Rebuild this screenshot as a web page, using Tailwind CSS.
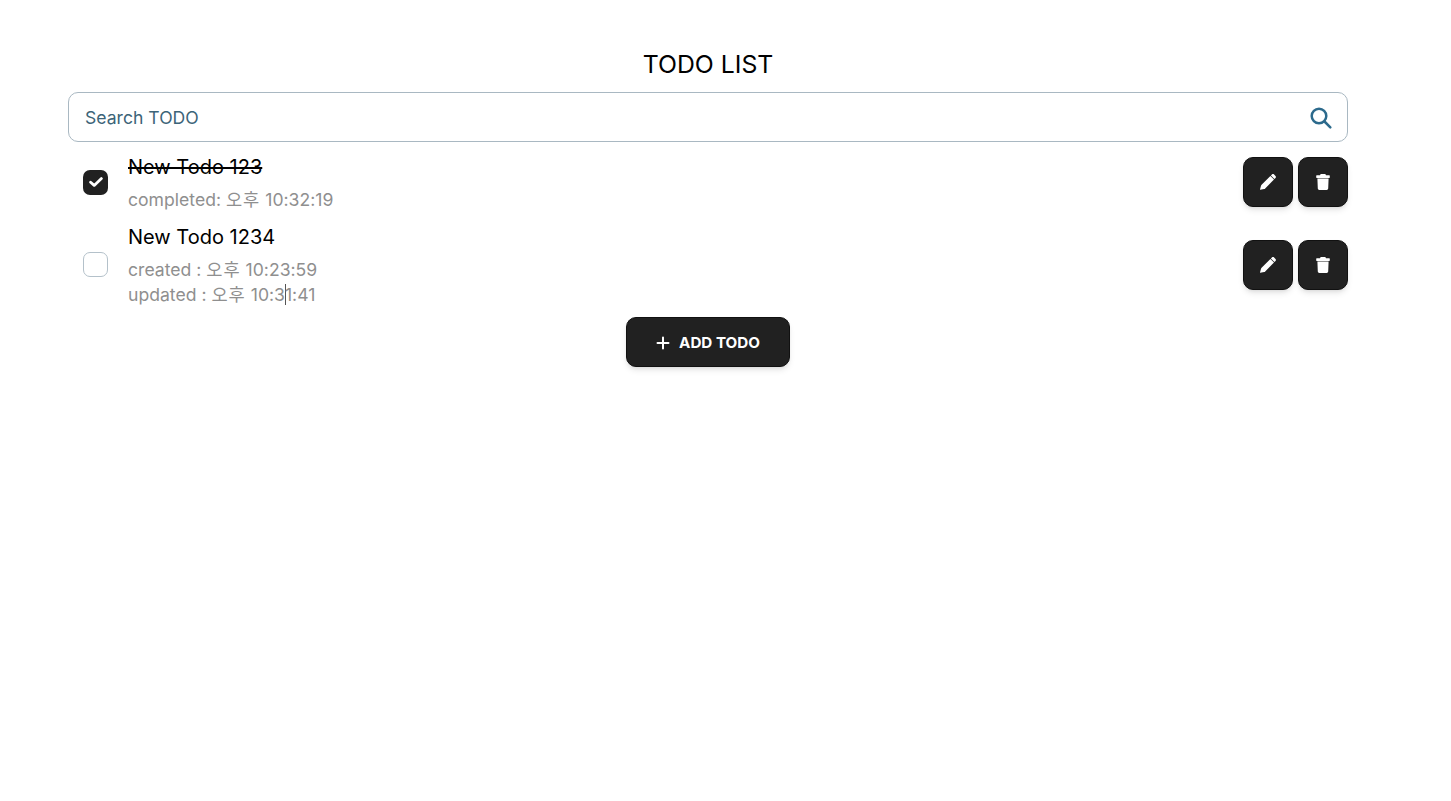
<!DOCTYPE html>
<html lang="en">
<head>
  <meta charset="UTF-8" />
  <meta name="viewport" content="width=device-width, initial-scale=1.0" />
  <title>TODO LIST</title>
  <script src="https://cdn.jsdelivr.net/npm/@tailwindcss/browser@4"></script>
</head>
<body class="bg-white text-black min-h-screen font-['Inter','Noto_Sans_CJK_KR',sans-serif]">
  <main class="w-[1416px] px-[68px] pt-[47px]">
    <h1 class="text-[24.8px] leading-[34px] text-center">TODO LIST</h1>

    <!-- Search -->
    <div class="mt-[11px] h-[50px] flex items-center justify-between border border-[#a9b8c2] rounded-[10px] pl-[16px] pr-[15px]">
      <span class="pt-[2px] text-[17.6px] text-[#3c6478]">Search TODO</span>
      <svg class="w-[22px] h-[22px] fill-none stroke-[#2c6a8c] stroke-[2.5] mt-[1px]" viewBox="0 0 22 22" stroke-linecap="round">
        <circle cx="9" cy="9" r="7.3" />
        <path d="M14.5 14.5 20.3 20.3" />
      </svg>
    </div>

    <!-- Todo items -->
    <ul class="mt-[12px] flex flex-col gap-[14px]">
      <li class="flex items-center justify-between">
        <div class="flex items-center">
          <span class="ml-[15px] w-[25px] h-[25px] rounded-[7px] bg-[#212121] flex items-center justify-center">
            <svg class="w-[14px] h-[10px] fill-none stroke-white stroke-[2.8]" viewBox="0 0 14 10" stroke-linecap="round" stroke-linejoin="round"><path d="M1.6 5.2 5.2 8.4 12.4 1.6"/></svg>
          </span>
          <div class="ml-[20px] pt-px -mb-[2px]">
            <p class="text-xl leading-[24px] line-through">New Todo 123</p>
            <p class="mt-[8px] text-[17.6px] leading-[25px] text-[#8f8f8f]">completed: <span class="tracking-[1px]">오후</span> 10:32:19</p>
          </div>
        </div>
        <div class="flex gap-[5px]">
          <button class="w-[50px] h-[50px] rounded-[10px] bg-[#212121] border border-[#111] shadow-md flex items-center justify-center">
            <svg class="w-4 h-4 fill-white" viewBox="0 0 16 16"><path d="M.2 15.8C0 15.9 0 15.7 0 15.5L1 11.8C1.1 11.4 1.3 11 1.6 10.8L10.4 2 14 5.6 5.2 14.4C4.9 14.7 4.6 14.9 4.2 15ZM10.9 1.5 11.9.5C12.5-.1 13.5-.1 14.1.5L15.5 1.9C16.1 2.5 16.1 3.5 15.5 4.1L14.5 5.1Z"/></svg>
          </button>
          <button class="w-[50px] h-[50px] rounded-[10px] bg-[#212121] border border-[#111] shadow-md flex items-center justify-center">
            <svg class="w-[14px] h-4 fill-white" viewBox="0 0 14 16"><path d="M4.5.3C4.7 0 5 0 5.2 0H8.8C9 0 9.3 0 9.5.3L10 1.2H13C13.6 1.2 13.8 1.6 13.8 2.2V3.6C13.8 3.9 13.6 4.1 13.3 4.1H.7C.4 4.1.2 3.9.2 3.6V2.2C.2 1.6.4 1.2 1 1.2H4ZM1.4 4.5H12.6L12.2 14.6C12.1 15.4 11.5 16 10.7 16H3.3C2.5 16 1.9 15.4 1.8 14.6Z"/></svg>
          </button>
        </div>
      </li>
      <li class="flex items-center justify-between">
        <div class="flex items-center">
          <span class="ml-[15px] w-[25px] h-[25px] rounded-[7px] border border-[#b4c1ca] bg-white"></span>
          <div class="ml-[20px] pt-px -mb-[2px]">
            <p class="text-xl leading-[24px]">New Todo 1234</p>
            <p class="mt-[8px] text-[17.6px] leading-[25px] text-[#8f8f8f]">created : <span class="tracking-[1px]">오후</span> 10:23:59</p>
            <p class="text-[17.6px] leading-[25px] text-[#8f8f8f]">updated : <span class="tracking-[1px]">오후</span> 10:3<span class="inline-block w-px h-[21px] -mr-px align-[-4px] bg-[#555]"></span>1:41</p>
          </div>
        </div>
        <div class="flex gap-[5px]">
          <button class="w-[50px] h-[50px] rounded-[10px] bg-[#212121] border border-[#111] shadow-md flex items-center justify-center">
            <svg class="w-4 h-4 fill-white" viewBox="0 0 16 16"><path d="M.2 15.8C0 15.9 0 15.7 0 15.5L1 11.8C1.1 11.4 1.3 11 1.6 10.8L10.4 2 14 5.6 5.2 14.4C4.9 14.7 4.6 14.9 4.2 15ZM10.9 1.5 11.9.5C12.5-.1 13.5-.1 14.1.5L15.5 1.9C16.1 2.5 16.1 3.5 15.5 4.1L14.5 5.1Z"/></svg>
          </button>
          <button class="w-[50px] h-[50px] rounded-[10px] bg-[#212121] border border-[#111] shadow-md flex items-center justify-center">
            <svg class="w-[14px] h-4 fill-white" viewBox="0 0 14 16"><path d="M4.5.3C4.7 0 5 0 5.2 0H8.8C9 0 9.3 0 9.5.3L10 1.2H13C13.6 1.2 13.8 1.6 13.8 2.2V3.6C13.8 3.9 13.6 4.1 13.3 4.1H.7C.4 4.1.2 3.9.2 3.6V2.2C.2 1.6.4 1.2 1 1.2H4ZM1.4 4.5H12.6L12.2 14.6C12.1 15.4 11.5 16 10.7 16H3.3C2.5 16 1.9 15.4 1.8 14.6Z"/></svg>
          </button>
        </div>
      </li>
    </ul>

    <!-- Add -->
    <div class="mt-[12px] flex justify-center">
      <button class="w-[164px] h-[50px] pt-[2px] rounded-[10px] bg-[#212121] border border-[#111] text-white shadow-md flex items-center justify-center gap-[9px] text-[15.2px] font-bold">
        <svg class="w-[14px] h-[14px] fill-none stroke-white stroke-2" viewBox="0 0 14 14" stroke-linecap="round"><path d="M7 1.5V12.5M1.5 7H12.5"/></svg>
        ADD TODO
      </button>
    </div>
  </main>
</body>
</html>
